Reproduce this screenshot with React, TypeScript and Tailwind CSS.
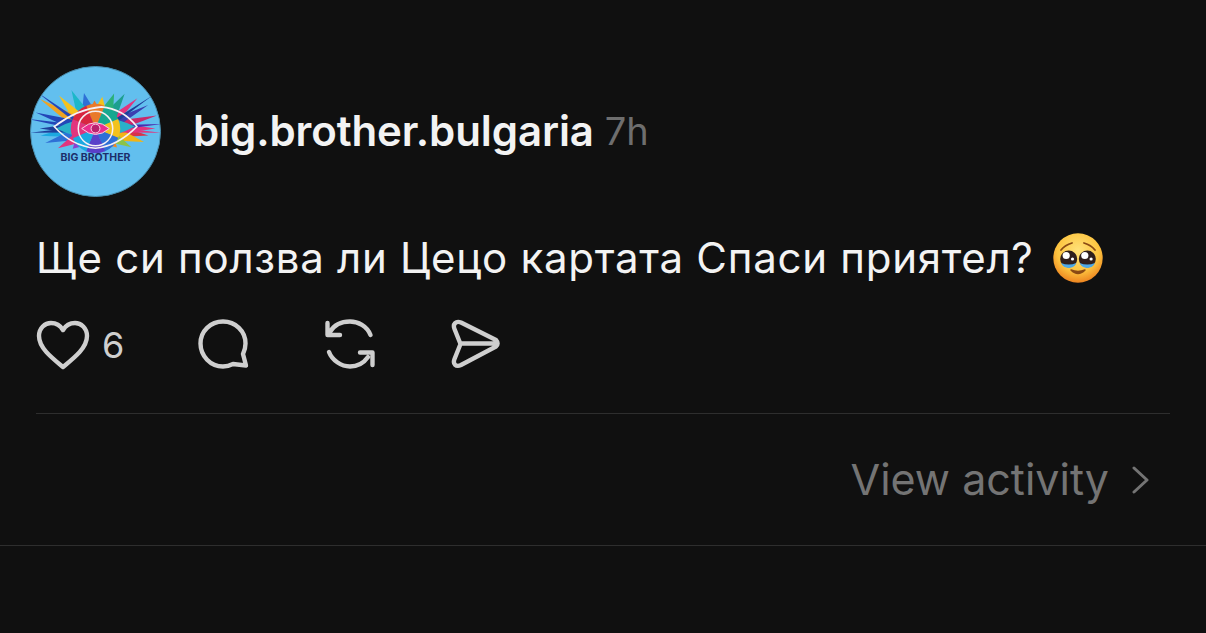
import React from "react";

const spikes: [number, number, string, number][] = [
  [0, 62, "#e2347e", 12], [-12, 58, "#c8296b", 10], [12, 50, "#d8324a", 12], [-24, 50, "#3a3fb0", 9],
  [24, 46, "#f2b417", 14], [-36, 44, "#e2347e", 10], [-50, 40, "#1d9f8f", 14], [-62, 38, "#2bb07a", 16],
  [-78, 38, "#f2c21f", 16], [-92, 40, "#e97a2a", 16], [-108, 40, "#2f6fd6", 16], [-122, 42, "#1bb7c9", 14],
  [-138, 42, "#f4c21f", 12], [-152, 54, "#f0a321", 12], [-165, 56, "#2446b8", 10], [180, 58, "#1f3f9a", 10],
  [168, 52, "#1ba9e0", 12], [155, 48, "#2f6fd6", 12], [140, 42, "#e2347e", 12], [125, 36, "#8a3fd1", 16],
  [108, 30, "#3b3fc4", 16], [90, 28, "#e2347e", 16], [72, 30, "#c83fb0", 16], [55, 34, "#f08a24", 14], [40, 40, "#8bc34a", 12],
  [-4, 66, "#4b2fb0", 5], [6, 64, "#e2347e", 5], [174, 64, "#1f3f9a", 5], [-172, 66, "#2446b8", 5], [-30, 56, "#1f3f9a", 4], [-148, 60, "#2446b8", 4],
];

const ring: [number, string][] = [
  [-90, "#e97a2a"], [-45, "#18a890"], [0, "#f2c21f"], [45, "#2f6fd6"], [90, "#5a3fc9"], [135, "#1ba9e0"], [180, "#e2347e"], [225, "#d8283f"],
];

function wedge(a: number, r: number) {
  const p = (d: number) => `${(Math.cos((d * Math.PI) / 180) * r).toFixed(1)} ${(Math.sin((d * Math.PI) / 180) * r).toFixed(1)}`;
  return `M0 0L${p(a - 23)}A${r} ${r} 0 0 1 ${p(a + 23)}Z`;
}

function spike(a: number, len: number, w: number) {
  const t = (a * Math.PI) / 180;
  const cx = Math.cos(t), cy = Math.sin(t);
  const sx = 22 * cx, sy = 14 * cy;
  const h = w / 2;
  const xLen = len * (Math.abs(cx) * 0.98 + Math.abs(cy) * 0.68);
  const ey = xLen * cy * (cy > 0 ? 0.62 : 1);
  return `M${(sx - cy * h).toFixed(1)} ${(sy + cx * h).toFixed(1)}L${(xLen * cx).toFixed(1)} ${ey.toFixed(1)}L${(sx + cy * h).toFixed(1)} ${(sy - cx * h).toFixed(1)}Z`;
}

function Avatar() {
  return (
    <div className="relative w-[131px] h-[131px] rounded-full bg-[#62bfee] border border-[#4a8fb0] shrink-0 overflow-hidden">
      <svg viewBox="-65.5 -65.5 131 131" className="w-full h-full">
        <defs>
          <filter id="soft" x="-10%" y="-10%" width="120%" height="120%">
            <feGaussianBlur stdDeviation="0.5" />
          </filter>
        </defs>
        <g transform="translate(0,-3)" filter="url(#soft)">
          {spikes.map(([a, l, c, w], i) => (
            <path key={i} d={spike(a, l, w)} fill={c} />
          ))}
          <path d="M-40 0Q0 -22 40 -2Q0 20 -40 0Z" fill="#2bb0c9" />
          {ring.map(([a, c]) => (
            <path key={a} d={wedge(a, 25)} fill={c} />
          ))}
          <path d="M-42 -2Q-18 -20 6 -22Q28 -20 42 -2Q22 18 0 20Q-24 18 -42 -2Z" fill="none" stroke="#f5f0f5" strokeWidth="1.6" />
          <circle r="17.5" fill="none" stroke="#f5f0f5" strokeWidth="1.5" />
          <path d="M-14 0Q0 -12 14 0Q0 12 -14 0Z" fill="#ea2f8e" stroke="#f8d6e6" strokeWidth="1" />
          <circle r="4.5" fill="#b9206e" stroke="#f8d6e6" strokeWidth="1" />
        </g>
      </svg>
      <span className="absolute left-0 right-0 top-[85px] text-center text-[10.5px] leading-[12px] font-bold text-[#1c2e6a] font-['Inter',sans-serif]">
        BIG BROTHER
      </span>
    </div>
  );
}

function Emoji() {
  return (
    <svg viewBox="0 0 50 50" className="w-[50px] h-[50px] shrink-0 ml-[19px] mt-[-2px]">
      <defs>
        <radialGradient id="face" cx="50%" cy="35%" r="65%">
          <stop offset="0%" stopColor="#ffe27a" />
          <stop offset="65%" stopColor="#fdc43f" />
          <stop offset="100%" stopColor="#ed8420" />
        </radialGradient>
      </defs>
      <circle cx="25" cy="25" r="24.7" fill="url(#face)" />
      <path d="M8 17Q12 12 19 10M42 17Q38 12 31 10" stroke="#8a4a14" strokeWidth="1.8" fill="none" strokeLinecap="round" />
      <circle cx="15.7" cy="26" r="8.5" fill="#2f1f1c" />
      <circle cx="34.3" cy="26" r="8.5" fill="#2f1f1c" />
      <path d="M8 30A8.5 8.5 0 0 0 23.4 30Q15.7 33 8 30ZM26.6 30A8.5 8.5 0 0 0 42 30Q34.3 33 26.6 30Z" fill="#4ea9e6" />
      <circle cx="13.2" cy="22.5" r="3.6" fill="#fff" />
      <circle cx="31.8" cy="22.5" r="3.6" fill="#fff" />
      <circle cx="19.5" cy="26" r="1.6" fill="#fff" />
      <circle cx="38.1" cy="26" r="1.6" fill="#fff" />
      <path d="M18 37Q25 40 32 37Q25 44 18 37Z" fill="#8a4a14" stroke="#8a4a14" strokeWidth="1.5" strokeLinejoin="round" />
    </svg>
  );
}

export default function App() {
  return (
    <div lang="bg" className="w-[1206px] h-[633px] bg-[#101010] overflow-hidden font-['Inter',sans-serif]">
      <div className="flex items-center pl-[30px] pt-[66px]">
        <Avatar />
        <span className="ml-[32px] text-[42px] leading-[46px] font-semibold text-[#f3f3f3] tracking-[-0.1px] mt-[-2px]">big.brother.bulgaria</span>
        <span className="ml-[11px] text-[38px] leading-[46px] text-[#6e6e6e] mt-[-2px]">7h</span>
      </div>

      <div className="flex items-center pl-[36px] mt-[36px] h-[52px]">
        <span className="text-[42px] leading-[52px] text-[#f3f3f3] tracking-[0.72px] mt-[-2px]">Ще си ползва ли Цецо картата Спаси приятел?</span>
        <Emoji />
      </div>

      <div className="flex items-center pl-[36px] mt-[34px] h-[52px] text-[#cfcfcf]">
        <svg viewBox="0 0 54 50" className="w-[54px] h-[50px]" fill="none" stroke="currentColor" strokeWidth="4.4" strokeLinejoin="round" strokeLinecap="round">
          <path d="M27 47C16 38 3 28 3 16C3 8 9 3 15 3C20 3 24 5 27 10C30 5 34 3 39 3C45 3 51 8 51 16C51 28 38 38 27 47Z" />
        </svg>
        <span className="ml-[12px] w-[21px] text-[36px] leading-[40px]">6</span>
        <svg viewBox="0 0 52 52" className="ml-[75px] w-[52px] h-[52px]" fill="none" stroke="currentColor" strokeWidth="4.4" strokeLinejoin="round" strokeLinecap="round">
          <path d="M35 45C32 46.5 28.5 47.5 25 47.5C12.5 47.5 2.5 37 2.5 24.5C2.5 12 12.5 2.5 25 2.5C37.5 2.5 47.5 12 47.5 24.5C47.5 28.5 46.5 32 45 35L48 46.5Z" />
        </svg>
        <svg viewBox="0 0 52 52" className="ml-[74px] w-[52px] h-[52px]" fill="none" stroke="currentColor" strokeWidth="4.4" strokeLinejoin="round" strokeLinecap="round">
          <path d="M6 13C10 6 17 2.5 26 2.5C34 2.5 43 7 46.5 16M3.5 4V16H16M5 33C8 41 17 47.5 26 47.5C33 47.5 39 45 44 38M36 33.5H48.5V46" />
        </svg>
        <svg viewBox="0 0 52 52" className="ml-[74px] w-[52px] h-[52px]" fill="none" stroke="currentColor" strokeWidth="4.4" strokeLinejoin="round" strokeLinecap="round">
          <path d="M11 3.5L46 21Q49 24.5 46 27.5L11 46C6 48.5 2.5 45 4.5 40L10.5 25L4.5 10C2.5 5 6 1.5 11 3.5ZM10.5 24.5H47" />
        </svg>
      </div>

      <div className="mx-[36px] mt-[42px] h-px bg-[#2e2e2e]" />

      <div className="flex items-center justify-end pr-[57px] h-[131px]">
        <span className="text-[43px] leading-[50px] text-[#747474] mt-[-2px]">View activity</span>
        <svg viewBox="0 0 18 30" className="ml-[22px] w-[18px] h-[30px]" fill="none" stroke="#747474" strokeWidth="3" strokeLinecap="round" strokeLinejoin="round">
          <path d="M3 3L16 15L3 27" />
        </svg>
      </div>

      <div className="h-px bg-[#2e2e2e]" />
    </div>
  );
}
